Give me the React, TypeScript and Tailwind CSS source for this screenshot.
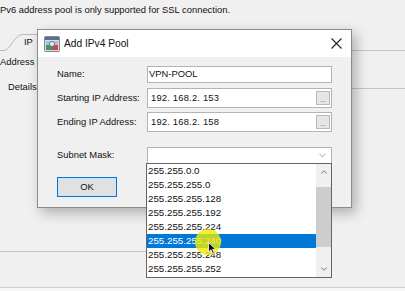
import { ChevronDown, ChevronUp } from 'lucide-react';

const masks = [
  '255.255.0.0',
  '255.255.255.0',
  '255.255.255.128',
  '255.255.255.192',
  '255.255.255.224',
  '255.255.255.240',
  '255.255.255.248',
  '255.255.255.252',
];

function PoolIcon() {
  return (
    <svg width="16" height="16" viewBox="0 0 16 16">
      <rect x="0.5" y="0.5" width="15" height="15" rx="1" fill="#d9dde3" stroke="#7b8594" />
      <rect x="1" y="1" width="14" height="3" fill="#5d7088" />
      <rect x="2" y="5" width="12" height="9" fill="#9fc4e0" />
      <rect x="2" y="9" width="6" height="5" fill="#3e9a5c" />
      <rect x="8" y="9" width="6" height="5" fill="#d0474a" />
      <circle cx="8" cy="8" r="2.5" fill="#e6eef6" stroke="#4b6a8a" strokeWidth="0.8" />
    </svg>
  );
}

function BrowseButton() {
  return (
    <div className="my-[2px] mr-[1px] flex w-[14px] items-start justify-center border border-[#b9b9b9] bg-[#e6e6e6] pt-[4px] text-[7px] leading-none text-[#555]">
      ...
    </div>
  );
}

function Field({ label, children }: { label: string; children: React.ReactNode }) {
  return (
    <div className="flex items-center">
      <div className="w-[90px] shrink-0">{label}</div>
      {children}
    </div>
  );
}

export default function App() {
  return (
    <div className="relative h-[291px] w-[405px] overflow-hidden bg-[#f0f0f0] font-['Liberation_Sans',Arial,sans-serif] text-[9.4px] text-[#111]">
      {/* background page */}
      <div className="flex h-[20px] items-center">Pv6 address pool is only supported for SSL connection.</div>
      <div className="flex h-[31px] items-end">
        <svg width="405" height="31" viewBox="0 0 405 31" className="block">
          <path d="M0 30.5 H4 C10 30.5 14 15.5 22 14.5 H40" fill="none" stroke="#b8b8b8" />
          <path d="M352 30.5 H405" fill="none" stroke="#c4c4c4" />
          <text x="24" y="25" fontSize="9.4" fill="#111" fontFamily="Liberation Sans, Arial, sans-serif">IP</text>
        </svg>
      </div>
      <div className="flex h-[22px] items-center pt-[1px]">Address P</div>
      <div className="flex h-[28px] items-center">
        <span className="pl-[8px]">Details</span>
        <div className="ml-[10px] mt-[3px] h-px flex-1 bg-[#c4c4c4]" />
      </div>
      <div className="h-[151px]">
        <div className="h-full w-[146px] border-b border-[#c6c6c6]" />
      </div>
      <div className="h-[35px]" />
      <div className="h-[4px] border-t border-[#cfcfcf] bg-[#f7f7f7]" />

      {/* dialog */}
      <div className="absolute left-[37px] top-[29px] flex h-[179px] w-[315px] flex-col border border-[#8c8c8c] bg-[#f0f0f0] shadow-[4px_5px_12px_rgba(0,0,0,0.28)]">
        <div className="flex h-[27px] shrink-0 items-center bg-white pl-[6px] pr-[8px]">
          <PoolIcon />
          <span className="ml-[4px] text-[10.2px] text-[#111]">Add IPv4 Pool</span>
          <svg width="11" height="11" viewBox="0 0 11 11" className="ml-auto mr-[1px]">
            <path d="M0.5 0.5 L10.5 10.5 M10.5 0.5 L0.5 10.5" stroke="#222" strokeWidth="1.1" />
          </svg>
        </div>
        <div className="flex flex-col pl-[19px] pr-[19px] pt-[9px]">
          <Field label="Name:">
            <div className="flex h-[17px] flex-1 items-center border border-[#b4b4b4] bg-white pl-[1px]">VPN-POOL</div>
          </Field>
          <div className="mt-[5px]">
            <Field label="Starting IP Address:">
              <div className="flex h-[20px] flex-1 border border-[#b4b4b4] bg-white">
                <span className="flex flex-1 items-center pl-[3px] tracking-[0.2px]">192. 168.2. 153</span>
                <BrowseButton />
              </div>
            </Field>
          </div>
          <div className="mt-[4px]">
            <Field label="Ending IP Address:">
              <div className="flex h-[20px] flex-1 border border-[#b4b4b4] bg-white">
                <span className="flex flex-1 items-center pl-[3px] tracking-[0.2px]">192. 168.2. 158</span>
                <BrowseButton />
              </div>
            </Field>
          </div>
          <div className="mt-[15px]">
            <Field label="Subnet Mask:">
              <div className="flex h-[17px] flex-1 items-center justify-end border border-[#b4b4b4] bg-white pr-[3px]">
                <ChevronDown size={11} strokeWidth={1.2} color="#555" />
              </div>
            </Field>
          </div>
          <div className="mt-[13px] flex">
            <div className="flex h-[20px] w-[60px] items-center justify-center border border-[#0078d7] bg-[#e1e1e1] shadow-[inset_0_0_0_1px_#cfe3f5]">
              OK
            </div>
          </div>
        </div>
      </div>

      {/* dropdown list */}
      <div className="absolute left-[146px] top-[163px] flex h-[115px] w-[186px] border border-[#646464] bg-white text-[9.75px] text-[#111]">
        <div className="flex flex-1 flex-col">
          {masks.map((m, i) => (
            <div
              key={m}
              className={
                i === 5
                  ? 'flex h-[14px] items-center bg-[#0078d7] pl-[1px] text-white'
                  : 'flex h-[14px] items-center pl-[1px]'
              }
            >
              {m}
            </div>
          ))}
        </div>
        <div className="flex w-[15px] flex-col bg-[#f0f0f0]">
          <div className="flex h-[16px] items-center justify-center">
            <ChevronUp size={10} strokeWidth={2} color="#606060" />
          </div>
          <div className="mt-[7px] h-[60px] bg-[#cdcdcd]" />
          <div className="mt-auto flex h-[16px] items-center justify-center">
            <ChevronDown size={10} strokeWidth={2} color="#606060" />
          </div>
        </div>
      </div>

      {/* cursor highlight */}
      <div className="pointer-events-none absolute left-[195px] top-[229px] h-[26px] w-[26px] rounded-full bg-[#eeea00]/80" />
      <svg width="9" height="13" viewBox="0 0 9 13" className="pointer-events-none absolute left-[208px] top-[242px]">
        <path d="M0.5 0.5 L0.5 10 L3 7.8 L4.8 12 L6.3 11.3 L4.6 7.3 L7.8 7.3 Z" fill="#111" stroke="#fff" strokeWidth="0.8" />
      </svg>
    </div>
  );
}
